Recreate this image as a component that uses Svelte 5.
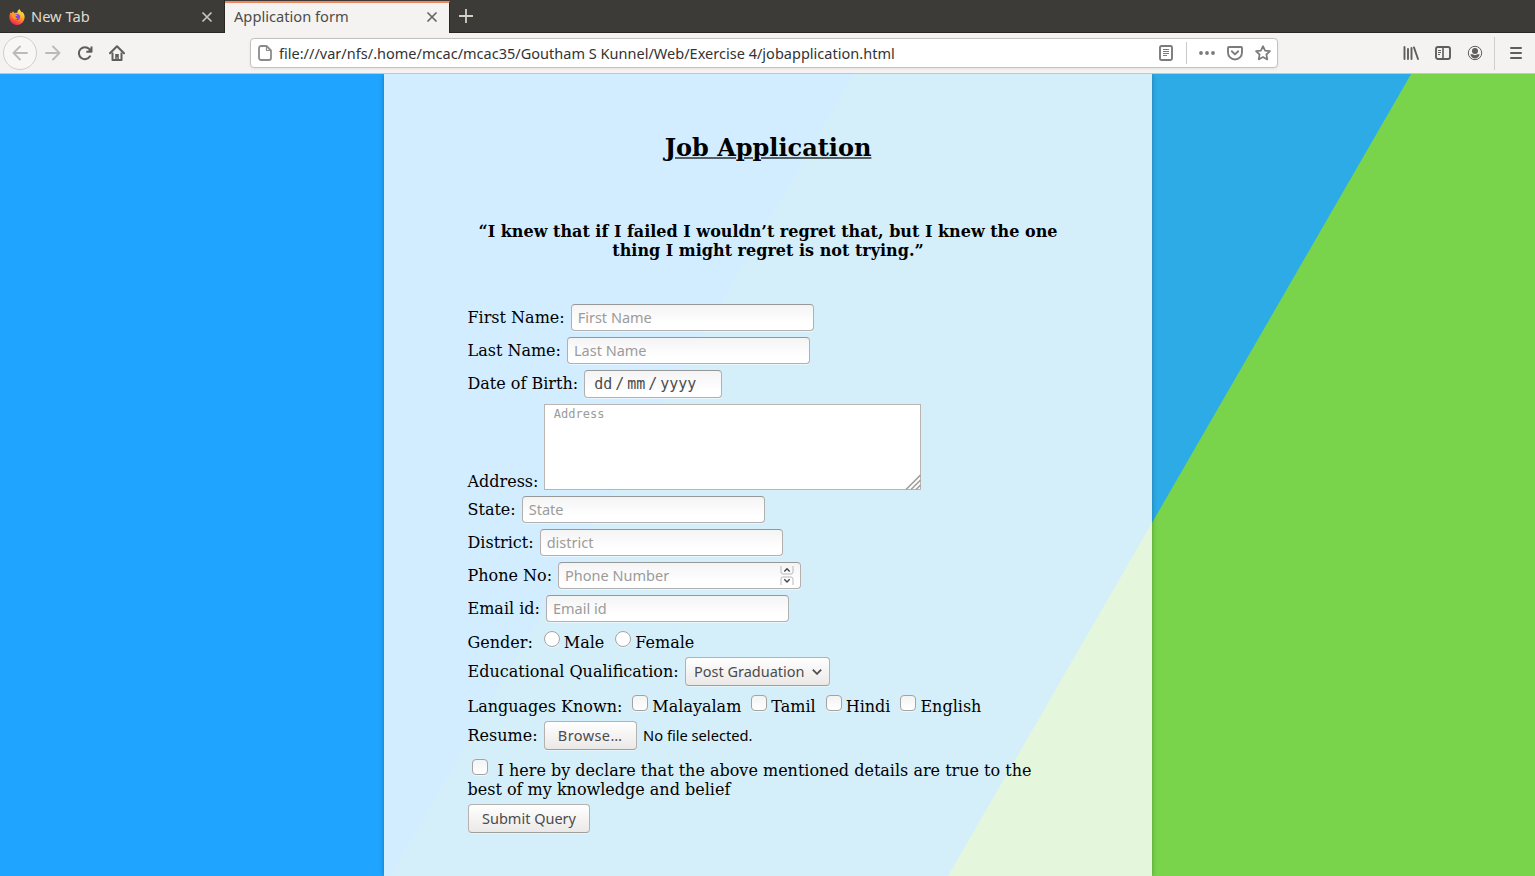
<script>
  const languages = ['Malayalam', 'Tamil', 'Hindi', 'English'];
</script>

<div class="window">
  <header class="tabs">
    <div class="tab idle">
      <svg class="fox" width="16" height="16" viewBox="0 0 16 16">
        <defs>
          <linearGradient id="flame" x1="0.8" y1="0" x2="0.25" y2="1">
            <stop offset="0" stop-color="#fff44f" />
            <stop offset="0.35" stop-color="#ffb526" />
            <stop offset="0.7" stop-color="#ff5b35" />
            <stop offset="1" stop-color="#e5186e" />
          </linearGradient>
        </defs>
        <path d="M1.800 3.200 2.600 4.300 4 2.200 5.600 4.200C6.600 3.600 7.500 3.600 8.200 3.900 8.300 2.300 9.200.8 10.600.1c.3 1.500 1.300 2.300 2.100 3.300l.5-.6C15 4.600 15.800 6.700 15.600 8.500A7.600 7.600 0 0 1 .4 8.400c0-2 .5-3.900 1.400-5.200Z" fill="url(#flame)" />
        <circle cx="7.900" cy="8" r="3.100" fill="#7b4be0" />
        <path d="M2.600 5.500c1.500-1 3.200-.8 4.400.2l1.500.2c-.2.900-1.500 1-2 1.700-.2 1.300.8 2 2 1.600-.8 1.900-3.500 1.700-4.500-.2-.5-1.200-1.400-2-1.400-3.500Z" fill="#ff9a28" />
      </svg>
      <span class="name">New Tab</span>
      <svg class="x" width="12" height="12" viewBox="0 0 12 12"><path d="M1.500 1.500l9 9M10.500 1.500l-9 9" /></svg>
    </div>
    <div class="tab active">
      <span class="name">Application form</span>
      <svg class="x" width="12" height="12" viewBox="0 0 12 12"><path d="M1.500 1.500l9 9M10.500 1.500l-9 9" /></svg>
    </div>
    <svg class="plus" width="14" height="14" viewBox="0 0 14 14"><path d="M7 0v14M0 7h14" /></svg>
  </header>

  <nav class="toolbar">
    <span class="back">
      <svg width="16" height="16" viewBox="0 0 16 16"><path d="M15 8H1.500M8 1.500 1.500 8 8 14.500" /></svg>
    </span>
    <svg class="forward" width="16" height="16" viewBox="0 0 16 16"><path d="M1 8h13.500M8 1.500 14.500 8 8 14.500" /></svg>
    <svg class="reload" width="16" height="16" viewBox="0 0 16 16">
      <path d="M13 11.300A6 6 0 1 1 12.400 4.200" fill="none" stroke="#5e5e5d" stroke-width="2" stroke-linecap="round" />
      <path d="M14.500 1.500v5.200H9.300" fill="none" stroke="#5e5e5d" stroke-width="2" stroke-linejoin="round" />
      <path d="M14.500 2.500v4.200H10.300Z" fill="#5e5e5d" />
    </svg>
    <svg class="home" width="16" height="16" viewBox="0 0 16 16">
      <path d="M1 8.300 8 1.300l7 7" fill="none" stroke="#5e5e5d" stroke-width="2" stroke-linecap="round" stroke-linejoin="round" />
      <path d="M3.500 7.500v7.500h9V7.500" fill="none" stroke="#5e5e5d" stroke-width="2" stroke-linejoin="round" />
      <path d="M6.200 9h3.600v6H6.200z" fill="#5e5e5d" />
      <path d="M8 12.500v1" stroke="#f4f3f1" stroke-width="1" />
    </svg>
    <div class="address">
      <svg width="14" height="16" viewBox="0 0 14 16" fill="none" stroke="#8b8b8b" stroke-width="1.800" stroke-linejoin="round">
        <path d="M3 1h5.500L13 5.500V13a2 2 0 0 1-2 2H3a2 2 0 0 1-2-2V3a2 2 0 0 1 2-2Z" />
        <path d="M8.500 1v4.500H13" stroke-width="1.200" />
      </svg>
      <span class="url">file:///var/nfs/.home/mcac/mcac35/Goutham S Kunnel/Web/Exercise 4/jobapplication.html</span>
      <svg class="reader" width="14" height="16" viewBox="0 0 14 16" fill="none" stroke="#7b7b7b">
        <rect x="1" y="1" width="12" height="14" rx="1.500" stroke-width="1.900" />
        <path d="M4 4.500h6M4 6.500h6M4 8.500h6M4 10.500h4" />
      </svg>
      <i class="bar"></i>
      <svg class="dots" width="16" height="16" viewBox="0 0 16 16" fill="#7b7b7b"><circle cx="2" cy="8" r="1.900" /><circle cx="8" cy="8" r="1.900" /><circle cx="14" cy="8" r="1.900" /></svg>
      <svg class="pocket" width="16" height="16" viewBox="0 0 16 16" fill="none" stroke="#7b7b7b" stroke-width="1.900" stroke-linecap="round" stroke-linejoin="round">
        <path d="M2 2h12a1 1 0 0 1 1 1v4.500a7 7 0 0 1-14 0V3a1 1 0 0 1 1-1Z" />
        <path d="M4.800 6.300 8 9.400l3.200-3.100" />
      </svg>
      <svg class="star" width="16" height="16" viewBox="0 0 16 16" fill="none" stroke="#7b7b7b" stroke-width="1.700" stroke-linejoin="round">
        <path d="m8 1.200 2.100 4.400 4.900.6-3.600 3.300.9 4.900L8 12.100l-4.300 2.300.9-4.900L1 6.200l4.900-.6Z" />
      </svg>
    </div>
    <div class="tools">
      <svg width="16" height="16" viewBox="0 0 16 16" stroke="#5e5e5d" stroke-width="1.900" stroke-linecap="round"><path d="M1.500 2v12M5 4v10M8.500 3v11M11 2.500l4 11.500" /></svg>
      <svg width="16" height="16" viewBox="0 0 16 16" fill="none" stroke="#5e5e5d">
        <rect x="1" y="2" width="14" height="12" rx="2" stroke-width="1.900" />
        <path d="M8 2v12" stroke-width="1.600" /><path d="M3 5.500h3M3 7.500h3M3 9.500h2" />
      </svg>
      <svg width="16" height="16" viewBox="0 0 16 16" fill="#5e5e5d">
        <circle cx="8" cy="8" r="6.700" fill="none" stroke="#5e5e5d" />
        <circle cx="8" cy="6" r="3" />
        <path d="M3.400 9.300h2.200c1.400 1.100 3.400 1.100 4.800 0h2.200c-.4 2.500-2.300 4.200-4.600 4.200s-4.200-1.700-4.600-4.200Z" />
      </svg>
      <i class="divider"></i>
      <svg class="menu" width="14" height="16" viewBox="0 0 14 16" stroke="#5e5e5d" stroke-width="2" stroke-linecap="round"><path d="M2 3h10M2 8h10M2 13h10" /></svg>
    </div>
  </nav>

  <main>
    <section class="panel">
      <h1>Job Application</h1>
      <h2>“I knew that if I failed I wouldn’t regret that, but I knew the one thing I might regret is not trying.”</h2>
      <form>
        <div class="row"><label for="first">First Name:</label><input id="first" class="field" placeholder="First Name" /></div>
        <div class="row"><label for="last">Last Name:</label><input id="last" class="field" placeholder="Last Name" /></div>
        <div class="row dob"><span class="label">Date of Birth:</span><div class="field date"><span>dd</span><span>/</span><span>mm</span><span>/</span><span>yyyy</span></div></div>
        <div class="row addr">
          <label for="addr">Address:</label>
          <div class="area">
            <textarea id="addr" placeholder="Address"></textarea>
            <svg width="16" height="16" viewBox="0 0 16 16" stroke="#a3a3a3" stroke-width="1.700"><path d="M1 15.500 15.500 1M6 15.500 15.500 6M11 15.500 15.500 11" /></svg>
          </div>
        </div>
        <div class="row"><label for="state">State:</label><input id="state" class="field" placeholder="State" /></div>
        <div class="row"><label for="district">District:</label><input id="district" class="field" placeholder="district" /></div>
        <div class="row">
          <label for="phone">Phone No:</label>
          <div class="number">
            <input id="phone" class="field" placeholder="Phone Number" />
            <svg width="14" height="21" viewBox="0 0 14 21" fill="none">
              <path d="M1 1v6q0 2 2 2h8q2 0 2-2V1M1 20v-6q0-2 2-2h8q2 0 2 2v6" stroke="#b9b9b9" />
              <path d="m4.300 6.500 2.700-2.700 2.700 2.700M4.300 14.300 7 17l2.700-2.700" stroke="#444" stroke-width="1.400" />
            </svg>
          </div>
        </div>
        <div class="row"><label for="email">Email id:</label><input id="email" class="field" placeholder="Email id" /></div>
        <div class="row options">
          <span class="label">Gender:</span>
          <label><input type="radio" name="gender" />Male</label>
          <label><input type="radio" name="gender" />Female</label>
        </div>
        <div class="row tall">
          <span class="label">Educational Qualification:</span>
          <button type="button" class="btn select">Post Graduation<svg width="10" height="6" viewBox="0 0 10 6" fill="none" stroke="#4c4c4c" stroke-width="1.700"><path d="M.8.700 5 4.900 9.200.700" /></svg></button>
        </div>
        <div class="row options">
          <span class="label">Languages Known:</span>
          {#each languages as language}
            <label><input type="checkbox" />{language}</label>
          {/each}
        </div>
        <div class="row tall"><span class="label">Resume:</span><button type="button" class="btn browse">Browse…</button><span class="nofile">No file selected.</span></div>
        <p class="declare"><input type="checkbox" aria-label="Declaration" /> I here by declare that the above mentioned details are true to the best of my knowledge and belief</p>
        <div class="row tall"><button type="button" class="btn submit">Submit Query</button></div>
      </form>
    </section>
  </main>
</div>

<style>
  :global(body) { margin: 0; overflow: hidden; }
  .window { width: 1535px; height: 876px; display: flex; flex-direction: column; font-family: "Noto Sans", sans-serif; font-size: 14.5px; box-sizing: border-box; }
  .window :global(*) { box-sizing: border-box; }
  svg { flex: none; display: block; }

  .tabs { height: 33px; flex: none; display: flex; background: #3c3b37; box-shadow: inset 0 -1px #282724; }
  .tab { display: flex; align-items: center; width: 225px; height: 33px; padding: 0 11px 0 9px; }
  .tab .name { flex: 1; white-space: nowrap; line-height: 20px; font-size: 14.67px; padding-bottom: 2px; }
  .fox { margin-right: 6px; }
  .x { fill: none; stroke: #c8c5bf; stroke-width: 1.7; }
  .idle { color: #dfdbd2; border-right: 1px solid #282724; }
  .active { background: #f4f3f1; color: #4c4c4c; border-top: 2px solid #f0845c; border-right: 1px solid #282724; padding-bottom: 2px; height: 32px; margin-top: 1px; }
  .active .x { stroke: #666; }
  .plus { margin: 9px 0 0 9px; stroke: #d4d0c8; stroke-width: 1.8; }

  .toolbar { height: 41px; flex: none; display: flex; align-items: center; background: #f4f3f1; border-bottom: 1px solid #c9c5c1; padding-left: 3px; }
  .back { width: 34px; height: 34px; border: 1px solid #d0cecb; border-radius: 50%; display: flex; align-items: center; justify-content: center; background: #f8f7f6; }
  .back svg, .forward { fill: none; stroke: #bbbab8; stroke-width: 1.9; stroke-linecap: round; stroke-linejoin: round; }
  .forward { margin-left: 8px; }
  .reload { margin-left: 16px; }
  .home { margin-left: 16px; }
  .address { margin-left: 125px; width: 1028px; height: 30px; display: flex; align-items: center; border: 1px solid #c4c1be; border-radius: 4px; background: #fff; padding: 0 6px 0 7px; box-shadow: 0 1px 3px rgba(0, 0, 0, .07); }
  .url { margin-left: 7px; flex: 1; color: #333; white-space: nowrap; line-height: 20px; letter-spacing: .015px; }
  .bar { width: 1px; height: 22px; background: #c9c9c9; margin: 0 12px 0 13px; }
  .dots, .pocket { margin-right: 12px; }
  .tools { display: flex; align-items: center; margin-left: 125px; gap: 16px; }
  .divider { width: 1px; height: 33px; background: #d0cecb; margin-left: -5px; }
  .menu { margin-left: -2px; }

  main {
    flex: 1; display: flex; justify-content: center; overflow: hidden;
    background:
      linear-gradient(-60deg, #79d34b 29.35%, transparent 29.4%),
      linear-gradient(-60deg, #2cabe6 57.25%, #1fa5ff 57.3%);
  }
  .panel { position: relative; width: 768px; left: 0.5px; background: rgba(255, 255, 255, .8); box-shadow: 0 0 5px rgba(0, 0, 0, .3); padding: 0 83.5px; font-family: "DejaVu Serif", serif; font-size: 16px; line-height: 19px; color: #000; }
  h1 { margin: 60px 0 0; font-size: 24px; line-height: 28px; text-align: center; text-decoration: underline 2px rgba(0, 0, 0, .6); text-underline-offset: 1px; }
  h2 { margin: 60px 0 0; font-size: 16px; line-height: 19px; text-align: center; }
  form { margin-top: 41px; }
  .row { height: 33px; display: flex; align-items: center; white-space: nowrap; }
  .row > label:first-child, .label { margin-right: 6px; }
  .dob { height: 34px; }
  .dob .label { margin-top: -2px; }
  .tall { height: 35px; }
  .field { width: 243px; height: 27px; border: 1px solid #b2b0ae; border-top-color: #979797; border-radius: 4px; background: linear-gradient(#f4f4f4, #fff 75%); padding: 0 6px 2px; font: 14.5px "Noto Sans", sans-serif; color: #4c4c4c; outline: none; box-shadow: 0 1px rgba(255, 255, 255, .5); }
  .field::placeholder { color: #9b9b9b; }
  .date { width: 138px; height: 28px; display: flex; align-items: center; padding: 0 9px; font: 15px "DejaVu Sans Mono", monospace; }
  .date span:nth-child(even) { width: 15px; text-align: center; }
  .addr { height: 92px; align-items: flex-end; padding-bottom: 3px; }
  .addr > label { margin-bottom: -1px; }
  .area { position: relative; width: 377px; height: 86px; }
  .area textarea { display: block; width: 100%; height: 100%; resize: none; border: 1px solid #bab5b0; border-radius: 0; background: #fff; padding: 2px 8.4px; font: 12px/14px "DejaVu Sans Mono", monospace; outline: none; }
  textarea::placeholder { color: #9b9b9b; }
  .area svg { position: absolute; right: 0; bottom: 0; }
  .number { position: relative; }
  .number svg { position: absolute; right: 7px; top: 3px; }
  .options { height: 29px; }
  .options label { display: flex; align-items: center; margin-right: 6px; }
  .options, .declare { padding-top: 5px; }
  input[type="radio"], input[type="checkbox"] { appearance: none; flex: none; width: 16px; height: 16px; border: 1px solid #a5a3a1; border-radius: 4px; margin: 0 4px; background: linear-gradient(#f3f3f3, #fff); box-shadow: 0 1px rgba(255, 255, 255, .5); }
  input[type="radio"] { border-radius: 50%; background: #fff; margin-left: 5px; }
  .options input { position: relative; top: -3px; }
  .btn { height: 29px; border: 1px solid #b4b1ae; border-bottom-color: #a09e9b; border-radius: 4px; background: linear-gradient(#fff, #ebe9e7); color: #4c4c4c; font: 14.5px "Noto Sans", sans-serif; padding: 0 0 2px; display: flex; align-items: center; justify-content: center; box-shadow: 0 1px rgba(255, 255, 255, .4); }
  .select { width: 145px; gap: 7px; padding-left: 1px; }
  .select svg { position: relative; top: 1px; }
  .browse { width: 93px; letter-spacing: .4px; }
  .submit { width: 122px; padding-left: 1px; }
  .nofile { font: 14.67px/20px "Noto Sans", sans-serif; margin-left: 6.500px; padding-bottom: 2px; }
  .declare { margin: 0; height: 48px; padding-top: 8px; }
  .declare input { vertical-align: 0; margin: -3px 5px 0 4px; position: relative; top: -1px; }
</style>
